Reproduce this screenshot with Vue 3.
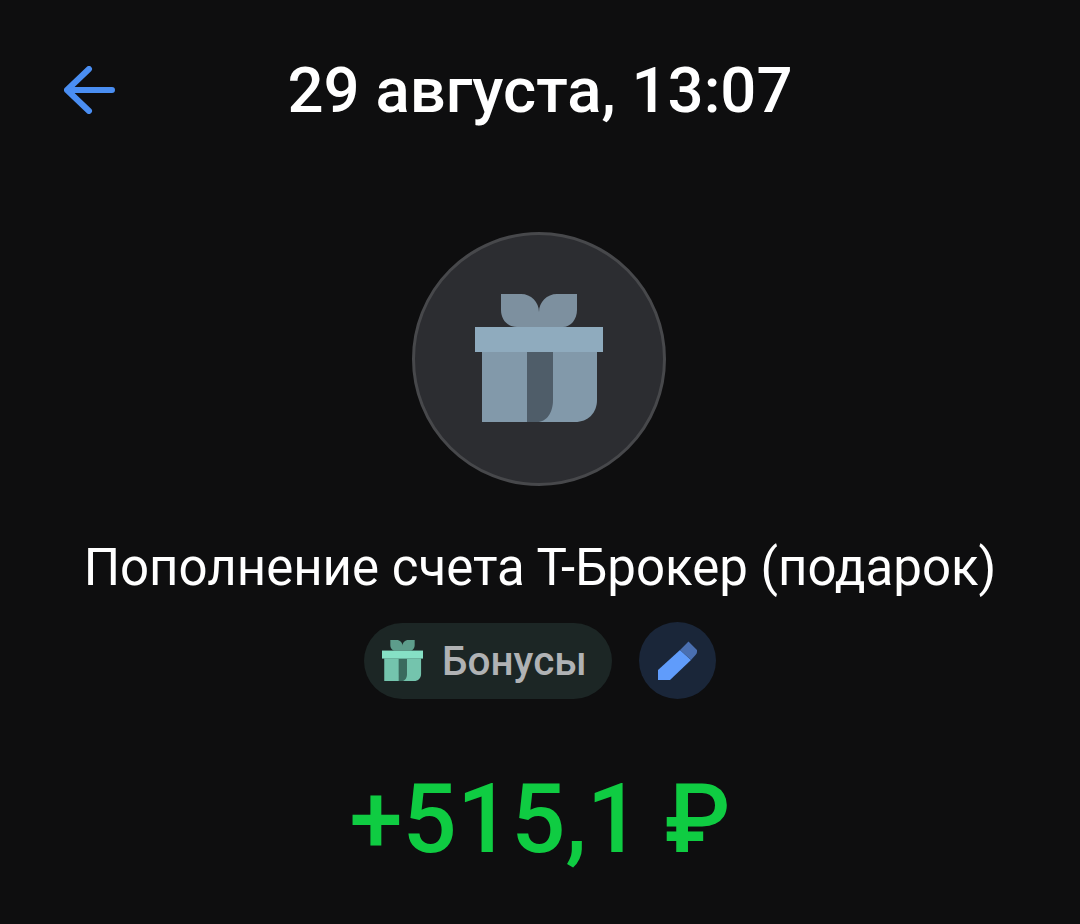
<template>
  <div class="screen">
    <!-- HEADER -->
    <header class="top-bar">
      <button class="back-btn" aria-label="Назад">
        <svg width="52" height="48" viewBox="0 0 52 48" fill="none">
          <path d="M25 3 3 24l22 21M3 24h45" stroke="#4a8ef2" stroke-width="6" stroke-linecap="round" stroke-linejoin="round" />
        </svg>
      </button>
      <h1>29 августа, 13:07</h1>
    </header>

    <!-- LOGO -->
    <div class="avatar">
      <svg class="gift-big" width="128" height="128" viewBox="0 0 128 128">
        <path class="bow" d="M26 0h20c10 0 18 8 18 18 0-10 8-18 18-18h20v16c0 9-6 17-14 17H42c-10 0-16-8-16-17z" />
        <path class="body" d="M7 58h115v48c0 13-9 22-22 22H7z" />
        <path class="ribbon" d="M52 58h26v48c0 12-6 22-16 22H52z" />
        <rect class="lid" y="33" width="128" height="25" />
      </svg>
    </div>

    <p class="title">Пополнение счета Т-Брокер (подарок)</p>

    <!-- CATEGORY -->
    <div class="meta">
      <div class="category">
        <svg class="gift-small" width="41" height="41" viewBox="0 0 128 128">
          <path class="bow" d="M26 0h20c10 0 18 8 18 18 0-10 8-18 18-18h20v16c0 9-6 17-14 17H42c-10 0-16-8-16-17z" />
          <path class="body" d="M7 58h115v48c0 13-9 22-22 22H7z" />
          <path class="ribbon" d="M52 58h26v48c0 12-6 22-16 22H52z" />
          <rect class="lid" y="33" width="128" height="25" />
        </svg>
        <span>Бонусы</span>
      </div>
      <button class="edit-btn" aria-label="Изменить">
        <svg width="77" height="77" viewBox="0 0 77 77">
          <path d="M19 48v10h12l21-20-11-10z" fill="#609cfb" />
          <path d="M41 28l8.500-8.500 8.500 8.500v2c0 1-.5 2-1.500 3L52 38z" fill="#4a6fb0" />
        </svg>
      </button>
    </div>

    <div class="amount">+515,1 ₽</div>
  </div>
</template>

<script setup>
</script>

<style>
html,
body {
  background: #0e0e0f;
}
</style>

<style scoped>
.screen {
  height: 924px;
  background: #0e0e0f;
  display: flex;
  flex-direction: column;
  align-items: center;
  font-family: Roboto, "Liberation Sans", sans-serif;
  overflow: hidden;
}

/* HEADER */
.top-bar {
  width: 100%;
  height: 180px;
  padding-top: 2px;
  box-sizing: border-box;
  position: relative;
  display: flex;
  justify-content: center;
  align-items: center;
  flex-shrink: 0;
}

.top-bar h1 {
  margin: 0;
  color: #fff;
  font-size: 63.5px;
  font-weight: 500;
  line-height: 70px;
}

.back-btn {
  position: absolute;
  left: 64px;
  top: 66px;
  padding: 0;
  width: 52px;
  height: 48px;
  border: 0;
  background: none;
}

/* LOGO */
.avatar {
  box-sizing: border-box;
  width: 254px;
  height: 254px;
  margin: 52px 2px 0 0;
  padding: 0 0 2px 0;
  border-radius: 50%;
  background: #2c2d31;
  border: 3px solid #47484b;
  display: flex;
  align-items: center;
  justify-content: center;
  flex-shrink: 0;
}

.gift-big {
  --bow: #7d909f;
  --body: #8299aa;
  --ribbon: #4f5d69;
  --lid: #8fabbe;
}

.gift-small {
  --bow: #5d9d8b;
  --body: #74c4ad;
  --ribbon: #3a6a5e;
  --lid: #86e0c5;
}

.bow {
  fill: var(--bow);
}

.body {
  fill: var(--body);
}

.ribbon {
  fill: var(--ribbon);
}

.lid {
  fill: var(--lid);
}

.title {
  margin: 54px 0 0;
  color: #fff;
  font-size: 51px;
  line-height: 56px;
  white-space: nowrap;
}

/* CATEGORY */
.meta {
  display: flex;
  align-items: center;
  gap: 27px;
  margin-top: 26px;
}

.category {
  box-sizing: border-box;
  width: 248px;
  height: 76px;
  padding-left: 18px;
  display: flex;
  align-items: center;
  gap: 19px;
  border-radius: 38px;
  background: #1c2625;
  color: #b0b2b4;
  font-size: 40.5px;
  font-weight: 500;
}

.edit-btn {
  width: 77px;
  height: 77px;
  padding: 0;
  border: 0;
  border-radius: 50%;
  background: #1a2639;
}

.edit-btn svg {
  display: block;
}

.amount {
  margin-top: 66px;
  color: #0fcc42;
  font-size: 95.5px;
  font-weight: 500;
  line-height: 108px;
  white-space: nowrap;
}
</style>
